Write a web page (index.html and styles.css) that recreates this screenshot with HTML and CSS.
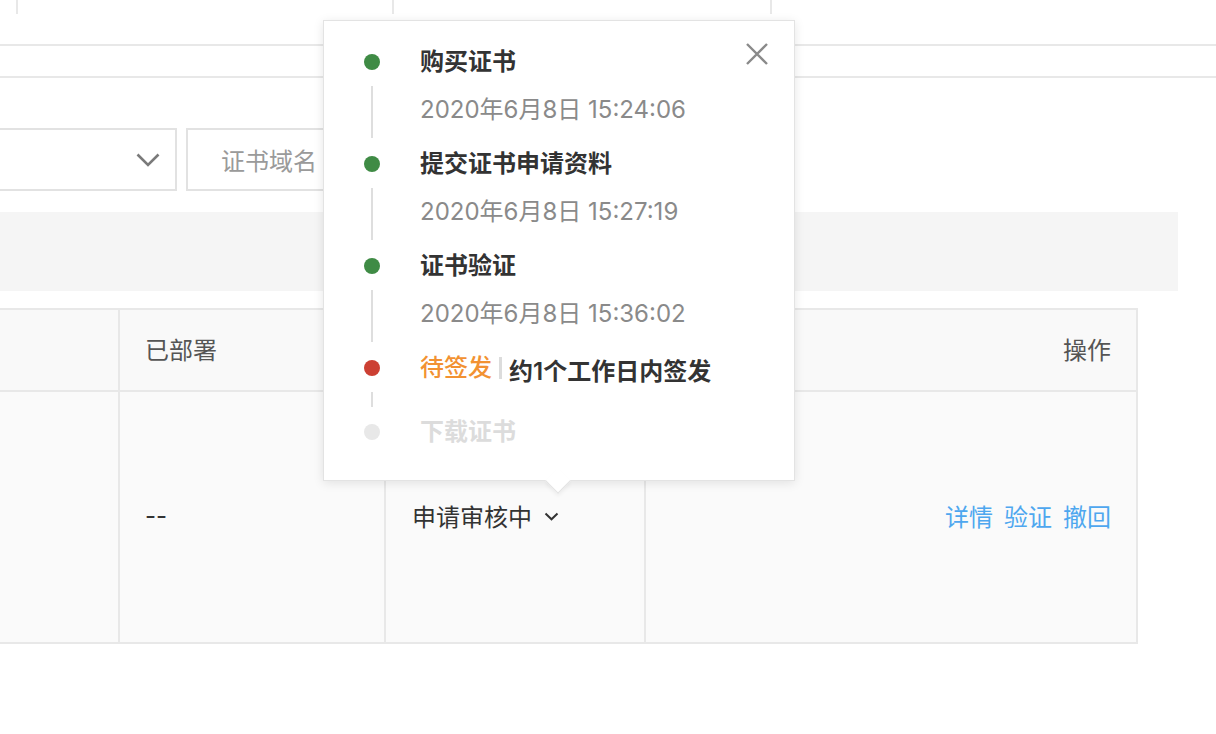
FILE: index.html
```html
<!DOCTYPE html>
<html lang="zh-CN">
<head>
<meta charset="utf-8">
<title>证书列表</title>
<link rel="stylesheet" href="styles.css">
</head>
<body>
<div class="page">
  <div class="summary">
    <div class="summary-cell"></div>
    <div class="summary-cell"></div>
    <div class="summary-cell"></div>
  </div>
  <div class="tabs"></div>

  <div class="filters">
    <div class="select">
      <svg class="select-arrow" width="24" height="14" viewBox="0 0 24 14"><path d="M1.5 1.5 L12 12 L22.5 1.5" fill="none" stroke="#7a7a7a" stroke-width="2.6"/></svg>
    </div>
    <div class="search">证书域名</div>
  </div>

  <div class="toolbar"></div>

  <div class="cert-table">
    <div class="cell head"></div>
    <div class="cell head">已部署</div>
    <div class="cell head"></div>
    <div class="cell head right">操作</div>

    <div class="cell body"></div>
    <div class="cell body">--</div>
    <div class="cell body">
      <span class="status">申请审核中
        <svg class="status-arrow" width="15" height="9" viewBox="0 0 15 9"><path d="M1.5 1.5 L7.5 7.3 L13.5 1.5" fill="none" stroke="#333" stroke-width="2"/></svg>
      </span>
    </div>
    <div class="cell body right">
      <div class="actions">
        <a class="action">详情</a>
        <a class="action">验证</a>
        <a class="action">撤回</a>
      </div>
    </div>
  </div>

  <div class="popover">
    <button class="close" aria-label="关闭">
      <svg width="22" height="22" viewBox="0 0 22 22"><path d="M1 1 L21 21 M21 1 L1 21" stroke="#8a8a8a" stroke-width="2.4"/></svg>
    </button>
    <ul class="timeline">
      <li class="step done">
        <div class="rail"><span class="dot"></span><span class="line"></span></div>
        <div class="content">
          <div class="title">购买证书</div>
          <div class="time">2020年6月8日 15:24:06</div>
        </div>
      </li>
      <li class="step done">
        <div class="rail"><span class="dot"></span><span class="line"></span></div>
        <div class="content">
          <div class="title">提交证书申请资料</div>
          <div class="time">2020年6月8日 15:27:19</div>
        </div>
      </li>
      <li class="step done">
        <div class="rail"><span class="dot"></span><span class="line"></span></div>
        <div class="content">
          <div class="title">证书验证</div>
          <div class="time">2020年6月8日 15:36:02</div>
        </div>
      </li>
      <li class="step current">
        <div class="rail"><span class="dot"></span><span class="line"></span></div>
        <div class="content">
          <div class="title"><span class="pending">待签发</span><span class="sep"></span><span class="eta">约1个工作日内签发</span></div>
        </div>
      </li>
      <li class="step todo">
        <div class="rail"><span class="dot"></span></div>
        <div class="content">
          <div class="title">下载证书</div>
        </div>
      </li>
    </ul>
    <span class="arrow"></span>
  </div>
</div>
</body>
</html>
```

FILE: styles.css
```css
* {
  box-sizing: border-box;
}

html, body {
  margin: 0;
  padding: 0;
  background: #fff;
}

body {
  font-family: "Inter", "Noto Sans CJK SC", sans-serif;
  font-size: 24px;
  color: #333;
  overflow: hidden;
}

.page {
  position: relative;
  width: 1216px;
  height: 734px;
}

/* summary strip at the very top */
.summary {
  display: grid;
  grid-template-columns: 376px 378px 1fr;
  height: 14px;
  padding-left: 16px;
}

.summary-cell {
  border-left: 2px solid #e8e8e8;
}

.tabs {
  margin-top: 30px;
  height: 34px;
  border-top: 2px solid #e8e8e8;
  border-bottom: 2px solid #e8e8e8;
}

/* filter controls */
.filters {
  display: flex;
  gap: 9px;
  margin-top: 50px;
  margin-left: -40px;
}

.select {
  width: 217px;
  height: 63px;
  border: 2px solid #e2e2e2;
  display: flex;
  align-items: center;
  justify-content: flex-end;
  padding-right: 15px;
}

.select-arrow {
  display: block;
}

.search {
  width: 330px;
  height: 63px;
  border: 2px solid #e2e2e2;
  padding-left: 33px;
  display: flex;
  align-items: center;
  color: #9a9a9a;
  font-size: 24px;
}

.toolbar {
  margin-top: 21px;
  margin-left: -40px;
  width: 1218px;
  height: 79px;
  background: #f5f5f5;
}

/* certificate table */
.cert-table {
  display: grid;
  grid-template-columns: 160px 266px 260px 492px;
  grid-template-rows: 82px 252px;
  margin-top: 17px;
  margin-left: -42px;
  width: 1180px;
  border-top: 2px solid #e8e8e8;
  border-left: 2px solid #e8e8e8;
}

.cell {
  background: #f9f9f9;
  border-right: 2px solid #e8e8e8;
  border-bottom: 2px solid #e8e8e8;
  display: flex;
  align-items: center;
  padding: 0 25px 3px 25px;
}

.cell.head {
  color: #555;
}

.cell.body {
  color: #333;
  background: #fafafa;
}

.cell.right {
  justify-content: flex-end;
}

.status {
  display: inline-flex;
  align-items: center;
  padding-left: 1px;
}

.status-arrow {
  margin-left: 12px;
  margin-top: 2px;
}

.actions {
  display: flex;
  gap: 11px;
}

.action {
  color: #4ea7ef;
  text-decoration: none;
  cursor: pointer;
}

/* status popover */
.popover {
  position: absolute;
  left: 323px;
  top: 20px;
  width: 472px;
  height: 461px;
  background: #fff;
  border: 1px solid #e3e3e3;
  box-shadow: 0 2px 10px rgba(0, 0, 0, 0.10);
  padding: 17px 0 0 33px;
}

.close {
  position: absolute;
  top: 22px;
  right: 26px;
  width: 22px;
  height: 22px;
  padding: 0;
  border: 0;
  background: none;
  cursor: pointer;
}

.close svg {
  display: block;
}

.arrow {
  position: absolute;
  left: 225px;
  bottom: -10px;
  width: 18px;
  height: 18px;
  background: #fff;
  border-right: 1px solid #e3e3e3;
  border-bottom: 1px solid #e3e3e3;
  transform: rotate(45deg);
  box-shadow: 2px 2px 4px rgba(0, 0, 0, 0.05);
}

.timeline {
  list-style: none;
  margin: 0;
  padding: 0;
}

.step {
  display: grid;
  grid-template-columns: 30px 1fr;
  column-gap: 33px;
  padding-bottom: 6px;
}

.step.current {
  padding-bottom: 16px;
}

.rail {
  display: flex;
  flex-direction: column;
  align-items: center;
  margin-bottom: -4px;
}

.step.current .rail {
  margin-bottom: -15px;
}

.dot {
  flex: none;
  width: 16px;
  height: 16px;
  margin: 16px 0;
  border-radius: 50%;
  background: #3f8b45;
}

.line {
  flex: 1;
  width: 2px;
  background: #dedede;
}

.step.current .dot {
  background: #cc4033;
}

.step.todo .dot {
  background: #e8e8e8;
}

.title {
  height: 48px;
  line-height: 48px;
  font-weight: 600;
  color: #333;
  white-space: nowrap;
}

.time {
  height: 48px;
  line-height: 48px;
  color: #8a8a8a;
  white-space: nowrap;
}

.pending {
  color: #f29232;
  font-weight: 500;
}

.sep {
  display: inline-block;
  width: 3px;
  height: 22px;
  margin: 0 7px 0 7px;
  background: #dcdcdc;
  vertical-align: -3px;
}

.eta {
  position: relative;
  top: 4px;
}

.step.todo .title {
  color: #dcdcdc;
}
```
